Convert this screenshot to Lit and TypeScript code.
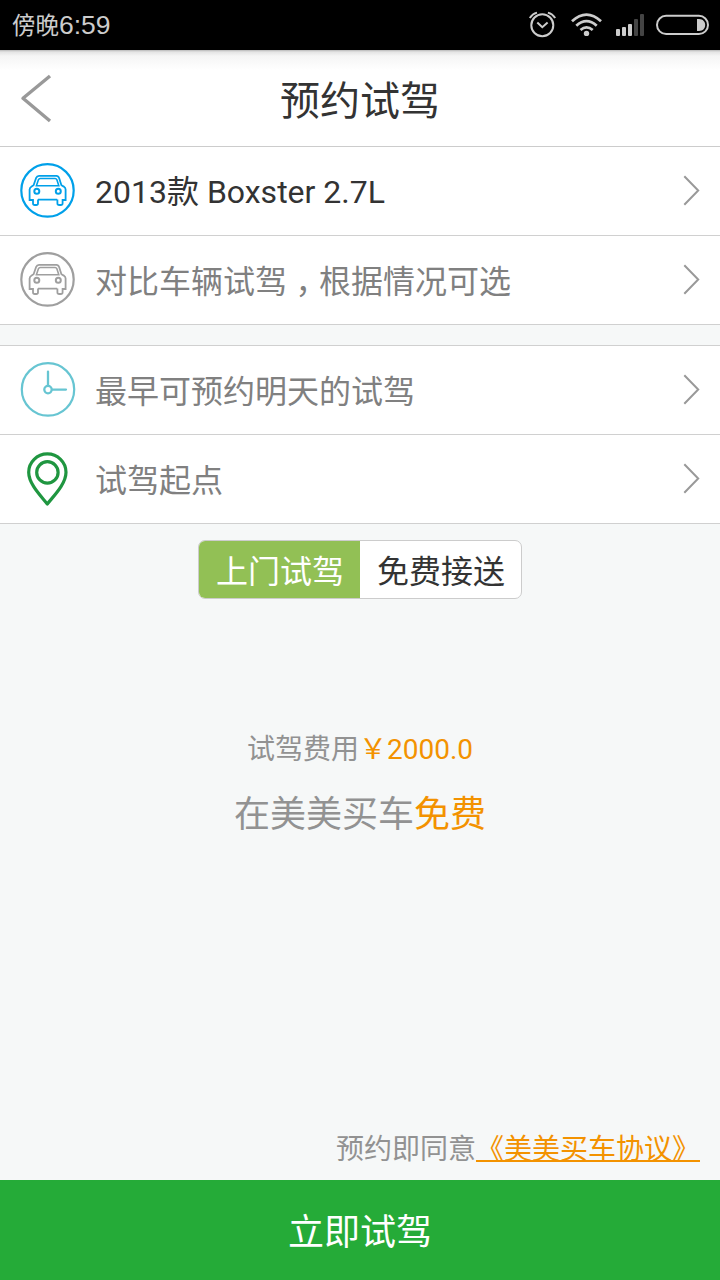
import { LitElement, html, css, svg } from "lit";
import { customElement, property, state } from "lit/decorators.js";

const carShape = svg`
  <circle cx="27.5" cy="27.4" r="26.2" stroke-width="2.2"/>
  <path stroke-width="1.8" d="M18 36.6H37.2M18 36.6V40.2Q18 42 16.2 42H14.8Q13 42 13 40.2V37H9.6V26.6Q9.6 24.6 11.6 23.4L13.6 22.2L16 15.2Q17 12.8 19 12.8H36.4Q38.4 12.8 39.2 15.2L41.4 22.2L43.8 23.6Q45.6 24.8 45.6 26.6V37H42.6V40.2Q42.6 42 40.8 42H39.2Q37.4 42 37.4 40.2V36.6"/>
  <path stroke-width="1.6" d="M16.4 22.8H38.8L36.8 16.6Q36.3 15.5 35.2 15.5H20.2Q19 15.5 18.5 16.6Z"/>
  <circle cx="16.8" cy="28.2" r="2.5" stroke-width="2"/>
  <circle cx="38.3" cy="28.2" r="2.5" stroke-width="2"/>`;

const clockShape = svg`
  <circle cx="28" cy="27.4" r="26.2" stroke-width="2.2"/>
  <circle cx="28" cy="27.6" r="3.7" stroke-width="2.3"/>
  <path stroke-width="2.3" stroke-linecap="round" d="M28 9.6V23.5M32 27.6H46"/>`;

const pinShape = svg`
  <path stroke-width="3.2" stroke-linejoin="round" d="M27.3 53C22 46 8.7 33.4 8.7 21.2A18.6 18.2 0 0 1 46 21.2C46 33.4 32.6 46 27.3 53Z"/>
  <circle cx="27.4" cy="21.4" r="10.7" stroke-width="3.2"/>`;

const shapes = { car: carShape, clock: clockShape, pin: pinShape };

@customElement("status-bar")
class StatusBar extends LitElement {
  static styles = css`
    :host { display: flex; align-items: center; height: 50px; background: #000; color: #ccc;
      font: 23.5px/46px "Noto Sans CJK SC", sans-serif; }
    .time { padding: 0 0 3px 12px; flex: 1; white-space: nowrap; }
    .digits { font: 26.5px/44px "Liberation Sans", sans-serif; }
    svg { display: block; }
  `;
  render() {
    return html`<span class="time">傍晚<span class="digits">6:59</span></span>
      <svg width="190" height="50" viewBox="530 0 190 50" overflow="visible" fill="none" stroke="#ccc">
        <circle cx="542.3" cy="25.2" r="11" stroke-width="2"/>
        <path stroke-width="2" d="M537.3 22.6L542.3 27.2L547.6 22.6M529.8 18Q532.5 13.8 537 12.6M555.2 18Q552.4 13.8 547.9 12.6"/>
        <path stroke-width="2.8" d="M572 21.2Q586.5 8 601 21.2M576.3 25.7Q586.5 16.6 596.7 25.7M580.5 30Q586.5 24.8 592.7 30"/>
        <circle cx="586.5" cy="33.4" r="2.7" fill="#ccc" stroke="none"/>
        <g stroke="none" fill="#ccc">
          <rect x="616" y="29" width="4" height="7" rx="1"/>
          <rect x="622" y="27" width="4" height="9" rx="1"/>
          <rect x="628" y="24" width="4" height="12" rx="1"/>
          <rect x="634" y="19" width="4" height="17" rx="1" fill="#444"/>
          <rect x="640" y="14" width="4" height="22" rx="1" fill="#444"/>
          <path d="M697 19H699C703 19 705.2 22 705.2 25S703 31 699 31H697Z"/>
        </g>
        <rect x="657" y="15.8" width="51" height="18.2" rx="9.1" stroke-width="2"/>
      </svg>`;
  }
}

@customElement("option-row")
class OptionRow extends LitElement {
  @property() icon: keyof typeof shapes = "car";
  @property() color = "#999";
  @property() label = "";
  @property({ type: Boolean, reflect: true }) filled = false;

  static styles = css`
    :host { display: flex; align-items: center; box-sizing: border-box; height: 89px; padding: 0 20px;
      background: #fff; border-bottom: 1px solid #d0d0d0; color: #808080;
      font: 32px/44px Roboto, "Noto Sans CJK SC", sans-serif; }
    :host([filled]) { color: #333; }
    .icon { display: block; margin-right: 19px; margin-bottom: 2px; }
    .label { flex: 1; white-space: nowrap; padding-top: 4px; }
    :host([filled]) .label { padding-top: 2px; }
    .comma { font-family: "Noto Sans CJK TC", sans-serif; position: relative; top: 10px; line-height: 1; }
    .chevron { display: block; margin-bottom: 2px; }
  `;
  render() {
    const parts = this.label.split("，");
    return html`
      <svg class="icon" width="56" height="55" fill="none" stroke=${this.color}>${shapes[this.icon]}</svg>
      <span class="label">${parts.map((p, i) => (i ? html`<span class="comma" lang="zh-TW">，</span>${p}` : p))}</span>
      <svg class="chevron" width="17" height="31" fill="none" stroke="#999" stroke-width="2"><path d="M1.3 1.2L15.2 15.5L1.3 29.8"/></svg>`;
  }
}

@customElement("app-root")
class AppRoot extends LitElement {
  @state() mode = 0;

  static styles = css`
    :host { display: flex; flex-direction: column; height: 1280px; width: 720px; overflow: hidden;
      background: #f6f8f8; color: #929292; font-family: Roboto, "Noto Sans CJK SC", sans-serif; }
    .header { display: grid; grid-template-columns: 80px 1fr 80px; align-items: center; box-sizing: border-box;
      height: 97px; border-bottom: 1px solid #ccc; color: #333;
      background: linear-gradient(#b8b8b8 0, #e4e4e4 2px, #f5f5f5 6px, #fff 20px); }
    .back { display: block; margin-left: 20px; }
    .title { font-size: 40px; line-height: 56px; text-align: center; padding-top: 7px; }
    .group + .group { margin-top: 20px; border-top: 1px solid #d0d0d0; }
    .toggle { display: flex; align-self: center; box-sizing: border-box; width: 324px; height: 59px;
      margin-top: 16px; border: 1px solid #ccc; border-radius: 7px; overflow: hidden; background: #fff; }
    .tab { flex: 1; text-align: center; font-size: 32px; line-height: 62px; padding-left: 1px; color: #333; }
    .tab.active { background: #92c055; color: #fff; }
    .price { margin-top: 131px; text-align: center; font-size: 28px; line-height: 40px; }
    .free { margin-top: 19px; text-align: center; font-size: 36px; line-height: 52px; }
    .accent { color: #f39200; }
    .terms { margin-top: auto; padding: 0 20px 10px 0; text-align: right; font-size: 28px; line-height: 40px; }
    .link { color: #f39200; text-decoration: underline; text-decoration-thickness: 2px;
      text-underline-offset: 1px; text-decoration-skip-ink: none; }
    .submit { height: 100px; background: #25ab38; color: #fff; text-align: center; font-size: 36px; line-height: 107px; }
  `;
  render() {
    return html`
      <status-bar></status-bar>
      <div class="header">
        <svg class="back" width="34" height="50" fill="none" stroke="#999" stroke-width="3.4"><path d="M30 3L3 25.3L30 48" stroke-linejoin="round"/></svg>
        <div class="title">预约试驾</div>
      </div>
      <div class="group">
        <option-row filled icon="car" color="#00a0e9" label="2013款 Boxster 2.7L"></option-row>
        <option-row icon="car" color="#9f9f9f" label="对比车辆试驾，根据情况可选"></option-row>
      </div>
      <div class="group">
        <option-row icon="clock" color="#67c5d2" label="最早可预约明天的试驾"></option-row>
        <option-row icon="pin" color="#1f9640" label="试驾起点"></option-row>
      </div>
      <div class="toggle">
        ${["上门试驾", "免费接送"].map((t, i) => html`<div class="tab ${i === this.mode ? "active" : ""}" @click=${() => (this.mode = i)}>${t}</div>`)}
      </div>
      <div class="price">试驾费用<span class="accent">￥2000.0</span></div>
      <div class="free">在美美买车<span class="accent">免费</span></div>
      <div class="terms">预约即同意<span class="link">《美美买车协议》</span></div>
      <div class="submit">立即试驾</div>`;
  }
}
